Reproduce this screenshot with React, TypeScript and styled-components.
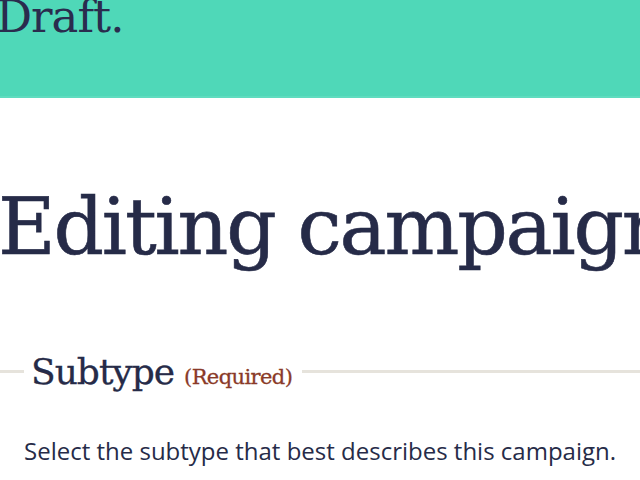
import React from "react";
import styled, { createGlobalStyle } from "styled-components";

const Global = createGlobalStyle`
  html, body { margin: 0; padding: 0; background: #ffffff; overflow: hidden; }
  body { font-family: "DejaVu Serif", serif; color: #262b48; }
`;

const Header = styled.header`
  height: 96px;
  background: #4fd8b8;
  border-bottom: 2px solid #5fdcbf;
  display: flex;
  align-items: flex-start;
  padding: 0;
  overflow: hidden;
`;

const Logo = styled.div`
  font-family: "DejaVu Serif", serif;
  font-size: 45px;
  line-height: 1;
  color: #2a2c4e;
  margin-top: -6px;
  margin-left: -4px;
  letter-spacing: -1px;
`;

const Main = styled.main`
  display: flex;
  flex-direction: column;
  overflow: hidden;
`;

const Title = styled.h1`
  margin: 90px 0 0 -2px;
  font-family: "DejaVu Serif", serif;
  font-weight: normal;
  font-size: 79px;
  line-height: 1;
  color: #262b48;
  white-space: nowrap;
  letter-spacing: -2.2px;
  -webkit-text-stroke: 0.6px #262b48;
`;

const Fieldset = styled.fieldset`
  margin: 84px 0 0 0;
  padding: 0 24px;
  border: none;
  border-top: 3px solid #e6e3dc;
  min-width: 0;
`;

const Legend = styled.legend`
  padding: 0 10px 0 7px;
  margin-left: 0;
  display: flex;
  align-items: baseline;
  gap: 10px;
`;

const LegendTitle = styled.span`
  font-family: "DejaVu Serif", serif;
  font-size: 36px;
  color: #262b48;
  letter-spacing: -1px;
  -webkit-text-stroke: 0.3px #262b48;
`;

const Required = styled.span`
  font-family: "DejaVu Serif", serif;
  font-size: 21px;
  color: #8a3a28;
  letter-spacing: -0.6px;
  -webkit-text-stroke: 0.3px #8a3a28;
`;

const Help = styled.p`
  margin: 42px 0 0 0;
  font-family: "Open Sans", sans-serif;
  font-size: 24px;
  color: #262b48;
  white-space: nowrap;
`;

export default function App() {
  return (
    <>
      <Global />
      <Header>
        <Logo>Draft.</Logo>
      </Header>
      <Main>
        <Title>Editing campaign</Title>
        <Fieldset>
          <Legend>
            <LegendTitle>Subtype</LegendTitle>
            <Required>(Required)</Required>
          </Legend>
          <Help>Select the subtype that best describes this campaign.</Help>
        </Fieldset>
      </Main>
    </>
  );
}
